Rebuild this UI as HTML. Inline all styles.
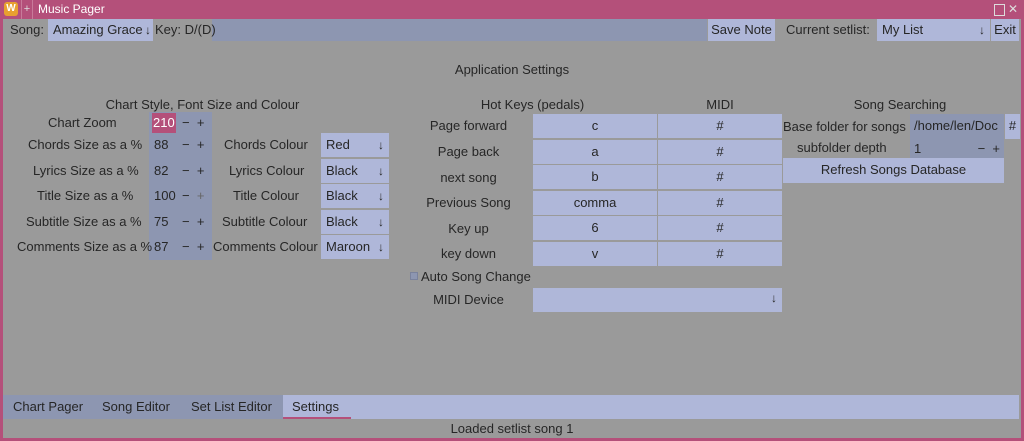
<!DOCTYPE html><html><head><style>
body{margin:0;width:1024px;height:441px;background:#9a9a9a;font-family:"Liberation Sans","DejaVu Sans",sans-serif;font-size:13px;color:#262626;position:relative;overflow:hidden}
div{position:absolute;box-sizing:border-box}
.l{background:#afb7d9}.d{background:#8d96b1}
.t{white-space:nowrap;line-height:20px}
.c{text-align:center}
.cell{background:#afb7d9;text-align:center;line-height:24px;height:24px}
.arr{position:absolute;right:5px;top:0;font-size:12px}
.top{line-height:22px}
</style></head><body>
<div style="left:0;top:0;width:1024px;height:441px;border:3px solid #b4507a;border-top:none"></div>
<div style="left:0;top:0;width:1024px;height:19px;background:#b4507a"></div>
<div style="left:4px;top:2px;width:14px;height:14px;background:#e8a030;border-radius:3px;color:#fff;font-size:10px;font-weight:bold;text-align:center;line-height:14px">W</div>
<div style="left:21px;top:0;width:12px;height:19px;color:#ddd;font-size:11px;line-height:18px;text-align:center;border-left:1px solid #c87a9a;border-right:1px solid #c87a9a">+</div>
<div class="t" style="left:38px;top:0;color:#fff;font-size:12px;line-height:19px">Music Pager</div>
<div style="left:994px;top:4px;width:11px;height:12px;border:1px solid #ddd"></div>
<div class="t" style="left:1008px;top:0;color:#ddd;font-size:12px;line-height:19px">✕</div>

<div class="d" style="left:212px;top:19px;width:495px;height:22px"></div>
<div class="t top" style="left:10px;top:19px">Song:</div>
<div class="l t top" style="left:48px;top:19px;width:105px;height:22px;padding-left:5px">Amazing Grace<span class="arr" style="right:2px">↓</span></div>
<div class="t top" style="left:155px;top:19px">Key: D/(D)</div>
<div class="l t c top" style="left:708px;top:19px;width:67px;height:22px">Save Note</div>
<div class="t top" style="left:786px;top:19px">Current setlist:</div>
<div class="l t top" style="left:877px;top:19px;width:113px;height:22px;padding-left:5px">My List<span class="arr">↓</span></div>
<div class="l t c top" style="left:991px;top:19px;width:28px;height:22px">Exit</div>

<div class="t c" style="left:412px;top:60px;width:200px">Application Settings</div>

<div class="t c" style="left:80px;top:95px;width:245px">Chart Style, Font Size and Colour</div>
<div class="t c" style="left:400px;top:95px;width:265px">Hot Keys (pedals)</div>
<div class="t c" style="left:680px;top:95px;width:80px">MIDI</div>
<div class="t c" style="left:800px;top:95px;width:200px">Song Searching</div>

<div class="t" style="left:48px;top:113px">Chart Zoom</div>
<div class="d" style="left:149px;top:112px;width:63px;height:148px"></div>
<div class="t" style="left:152px;top:113px;background:#b4507a;color:#fff;padding:0 1px">210</div>
<div class="t" style="left:182px;top:113px">−&nbsp;&nbsp;+</div>

<div class="t" style="left:28px;top:135px">Chords Size as a %</div>
<div class="t" style="left:33px;top:161px">Lyrics Size as a %</div>
<div class="t" style="left:37px;top:186px">Title Size as a %</div>
<div class="t" style="left:26px;top:212px">Subtitle Size as a %</div>
<div class="t" style="left:17px;top:237px">Comments Size as a %</div>
<div class="t" style="left:154px;top:135px">88</div><div class="t" style="left:182px;top:135px">−&nbsp;&nbsp;+</div>
<div class="t" style="left:154px;top:161px">82</div><div class="t" style="left:182px;top:161px">−&nbsp;&nbsp;+</div>
<div class="t" style="left:154px;top:186px">100</div><div class="t" style="left:182px;top:186px">−&nbsp;&nbsp;<span style="color:#666">+</span></div>
<div class="t" style="left:154px;top:212px">75</div><div class="t" style="left:182px;top:212px">−&nbsp;&nbsp;+</div>
<div class="t" style="left:154px;top:237px">87</div><div class="t" style="left:182px;top:237px">−&nbsp;&nbsp;+</div>

<div class="t" style="left:224px;top:135px">Chords Colour</div>
<div class="t" style="left:229px;top:161px">Lyrics Colour</div>
<div class="t" style="left:233px;top:186px">Title Colour</div>
<div class="t" style="left:222px;top:212px">Subtitle Colour</div>
<div class="t" style="left:213px;top:237px">Comments Colour</div>
<div class="l t" style="left:321px;top:133px;width:68px;height:24px;padding:2px 5px">Red<span class="arr" style="top:2px">↓</span></div>
<div class="l t" style="left:321px;top:159px;width:68px;height:24px;padding:2px 5px">Black<span class="arr" style="top:2px">↓</span></div>
<div class="l t" style="left:321px;top:184px;width:68px;height:24px;padding:2px 5px">Black<span class="arr" style="top:2px">↓</span></div>
<div class="l t" style="left:321px;top:210px;width:68px;height:24px;padding:2px 5px">Black<span class="arr" style="top:2px">↓</span></div>
<div class="l t" style="left:321px;top:235px;width:68px;height:24px;padding:2px 5px">Maroon<span class="arr" style="top:2px">↓</span></div>

<div class="t c" style="left:400px;top:116px;width:137px">Page forward</div>
<div class="t c" style="left:400px;top:142px;width:137px">Page back</div>
<div class="t c" style="left:400px;top:168px;width:137px">next song</div>
<div class="t c" style="left:400px;top:193px;width:137px">Previous Song</div>
<div class="t c" style="left:400px;top:219px;width:137px">Key up</div>
<div class="t c" style="left:400px;top:244px;width:137px">key down</div>
<div class="cell" style="left:533px;top:114px;width:124px">c</div><div class="cell" style="left:658px;top:114px;width:124px">#</div>
<div class="cell" style="left:533px;top:140px;width:124px">a</div><div class="cell" style="left:658px;top:140px;width:124px">#</div>
<div class="cell" style="left:533px;top:165px;width:124px">b</div><div class="cell" style="left:658px;top:165px;width:124px">#</div>
<div class="cell" style="left:533px;top:191px;width:124px">comma</div><div class="cell" style="left:658px;top:191px;width:124px">#</div>
<div class="cell" style="left:533px;top:216px;width:124px">6</div><div class="cell" style="left:658px;top:216px;width:124px">#</div>
<div class="cell" style="left:533px;top:242px;width:124px">v</div><div class="cell" style="left:658px;top:242px;width:124px">#</div>
<div style="left:410px;top:272px;width:8px;height:8px;background:#8d96b1;border:1px solid #7a829c"></div>
<div class="t" style="left:421px;top:267px">Auto Song Change</div>
<div class="t c" style="left:400px;top:290px;width:137px">MIDI Device</div>
<div class="l" style="left:533px;top:288px;width:249px;height:24px"><span class="arr" style="top:3px">↓</span></div>

<div class="t" style="left:783px;top:117px">Base folder for songs</div>
<div class="d t" style="left:910px;top:114px;width:94px;height:25px;padding:2px 4px;overflow:hidden">/home/len/Doc</div>
<div class="l t c" style="left:1005px;top:114px;width:15px;height:25px;padding-top:2px">#</div>
<div class="t" style="left:797px;top:138px">subfolder depth</div>
<div class="d t" style="left:910px;top:139px;width:94px;height:19px;padding:0 4px;line-height:19px">1<span style="position:absolute;right:4px">−&nbsp;&nbsp;+</span></div>
<div class="l t c" style="left:783px;top:158px;width:221px;height:25px;padding-top:2px">Refresh Songs Database</div>

<div class="l" style="left:3px;top:395px;width:1016px;height:24px"></div>
<div class="d" style="left:3px;top:395px;width:280px;height:24px"></div>
<div class="t" style="left:13px;top:397px">Chart Pager</div>
<div class="t" style="left:102px;top:397px">Song Editor</div>
<div class="t" style="left:191px;top:397px">Set List Editor</div>
<div style="left:283px;top:395px;width:68px;height:24px;border-bottom:2px solid #b4507a"></div>
<div class="t" style="left:292px;top:397px">Settings</div>
<div class="t c" style="left:412px;top:419px;width:200px">Loaded setlist song 1</div>
</body></html>
